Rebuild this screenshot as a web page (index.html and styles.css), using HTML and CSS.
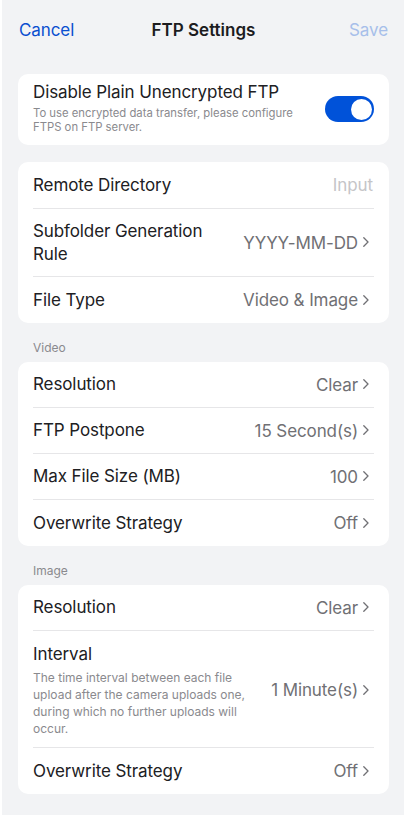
FILE: index.html
```html
<!DOCTYPE html>
<html>
<head>
<meta charset="utf-8">
<link rel="stylesheet" href="styles.css">
</head>
<body>
<div class="app">
  <header class="nav">
    <span class="nav-btn cancel">Cancel</span>
    <span class="nav-title">FTP Settings</span>
    <span class="nav-btn save">Save</span>
  </header>

  <section class="card card-first">
    <div class="toggle-row">
      <div class="toggle-text">
        <div class="row-title">Disable Plain Unencrypted FTP</div>
        <div class="row-sub">To use encrypted data transfer, please configure FTPS on FTP server.</div>
      </div>
      <div class="switch on"><span class="knob"></span></div>
    </div>
  </section>

  <section class="card card-general">
    <div class="row">
      <span class="label">Remote Directory</span>
      <span class="placeholder">Input</span>
    </div>
    <div class="row row-tall">
      <span class="label label-wrap">Subfolder Generation Rule</span>
      <span class="value">YYYY-MM-DD<svg class="chev" viewBox="0 0 6 10"><path d="M0.8 0.8l4.2 4.2-4.2 4.2"/></svg></span>
    </div>
    <div class="row">
      <span class="label">File Type</span>
      <span class="value">Video &amp; Image<svg class="chev" viewBox="0 0 6 10"><path d="M0.8 0.8l4.2 4.2-4.2 4.2"/></svg></span>
    </div>
  </section>

  <div class="section-label">Video</div>
  <section class="card">
    <div class="row">
      <span class="label">Resolution</span>
      <span class="value">Clear<svg class="chev" viewBox="0 0 6 10"><path d="M0.8 0.8l4.2 4.2-4.2 4.2"/></svg></span>
    </div>
    <div class="row">
      <span class="label">FTP Postpone</span>
      <span class="value">15 Second(s)<svg class="chev" viewBox="0 0 6 10"><path d="M0.8 0.8l4.2 4.2-4.2 4.2"/></svg></span>
    </div>
    <div class="row">
      <span class="label">Max File Size (MB)</span>
      <span class="value">100<svg class="chev" viewBox="0 0 6 10"><path d="M0.8 0.8l4.2 4.2-4.2 4.2"/></svg></span>
    </div>
    <div class="row">
      <span class="label">Overwrite Strategy</span>
      <span class="value">Off<svg class="chev" viewBox="0 0 6 10"><path d="M0.8 0.8l4.2 4.2-4.2 4.2"/></svg></span>
    </div>
  </section>

  <div class="section-label">Image</div>
  <section class="card">
    <div class="row">
      <span class="label">Resolution</span>
      <span class="value">Clear<svg class="chev" viewBox="0 0 6 10"><path d="M0.8 0.8l4.2 4.2-4.2 4.2"/></svg></span>
    </div>
    <div class="row row-desc">
      <div class="desc-text">
        <div class="label">Interval</div>
        <div class="desc">The time interval between each file upload after the camera uploads one, during which no further uploads will occur.</div>
      </div>
      <span class="value">1 Minute(s)<svg class="chev" viewBox="0 0 6 10"><path d="M0.8 0.8l4.2 4.2-4.2 4.2"/></svg></span>
    </div>
    <div class="row">
      <span class="label">Overwrite Strategy</span>
      <span class="value">Off<svg class="chev" viewBox="0 0 6 10"><path d="M0.8 0.8l4.2 4.2-4.2 4.2"/></svg></span>
    </div>
  </section>
</div>
</body>
</html>
```

FILE: styles.css
```css
* { box-sizing: border-box; }
html, body { margin: 0; padding: 0; }
body {
  background: #ffffff;
  font-family: "Inter", "Roboto", "Liberation Sans", sans-serif;
  color: #202023;
  -webkit-font-smoothing: antialiased;
}
.app {
  margin: 0 1px 2px 2px;
  height: 815px;
  background: #f2f3f5;
  padding: 0 15px 0 16px;
  overflow: hidden;
}
.nav {
  height: 60px;
  display: grid;
  grid-template-columns: 1fr auto 1fr;
  align-items: center;
  padding: 0 1px 0 1px;
  margin-bottom: 14px;
}
.nav-btn { font-size: 17px; letter-spacing: -0.1px; }
.cancel { color: #0a4fd0; justify-self: start; }
.save { color: #a7bfea; justify-self: end; }
.nav-title {
  font-size: 17px;
  font-weight: 600;
  color: #1c1c1e;
}
.card {
  background: #ffffff;
  border-radius: 10px;
  padding: 0 15px;
}
.card-first { margin-bottom: 17px; }
.toggle-row {
  display: flex;
  align-items: center;
  padding: 8px 0 11px;
}
.toggle-text { flex: 1; min-width: 0; padding-right: 30px; }
.row-title {
  font-size: 17px;
  line-height: 20px;
  letter-spacing: -0.1px;
}
.row-sub {
  font-size: 11.3px;
  line-height: 13.5px;
  color: #8a8a8e;
  margin-top: 5px;
}
.switch {
  width: 49px;
  height: 26px;
  border-radius: 13px;
  background: #0052d9;
  position: relative;
  flex: none;
  margin-top: 2px;
}
.knob {
  position: absolute;
  top: 2.5px;
  right: 2.5px;
  width: 21px;
  height: 21px;
  border-radius: 50%;
  background: #ffffff;
}
.row {
  display: flex;
  align-items: center;
  justify-content: space-between;
  min-height: 46px;
  border-bottom: 1px solid #e6e6e8;
}
.row:last-child { border-bottom: none; }
.card-general > .row:first-child { min-height: 47px; }
.row-tall { min-height: 68px; }
.label {
  font-size: 17px;
  line-height: 23px;
  letter-spacing: -0.1px;
  color: #202023;
}
.label-wrap { max-width: 190px; }
.value {
  display: flex;
  align-items: center;
  font-size: 17px;
  letter-spacing: -0.1px;
  color: #707074;
  white-space: nowrap;
  padding-right: 5px;
}
.placeholder {
  font-size: 17px;
  letter-spacing: -0.1px;
  color: #c5c5c8;
  padding-right: 1px;
}
.chev {
  width: 6px;
  height: 10px;
  margin-left: 5px;
  margin-top: -1px;
  fill: none;
  stroke: #707074;
  stroke-width: 1.3;
  stroke-linecap: round;
  stroke-linejoin: round;
}
.section-label {
  font-size: 12px;
  line-height: 17px;
  color: #8a8a8e;
  padding: 16px 0 6px 15px;
}
.row-desc {
  padding: 12px 0 10px;
}
.desc-text { flex: 1; min-width: 0; padding-right: 16px; }
.desc-text .label { line-height: 22px; }
.desc {
  font-size: 12px;
  line-height: 17px;
  margin-top: 4px;
  color: #8a8a8e;
  max-width: 222px;
}
```
